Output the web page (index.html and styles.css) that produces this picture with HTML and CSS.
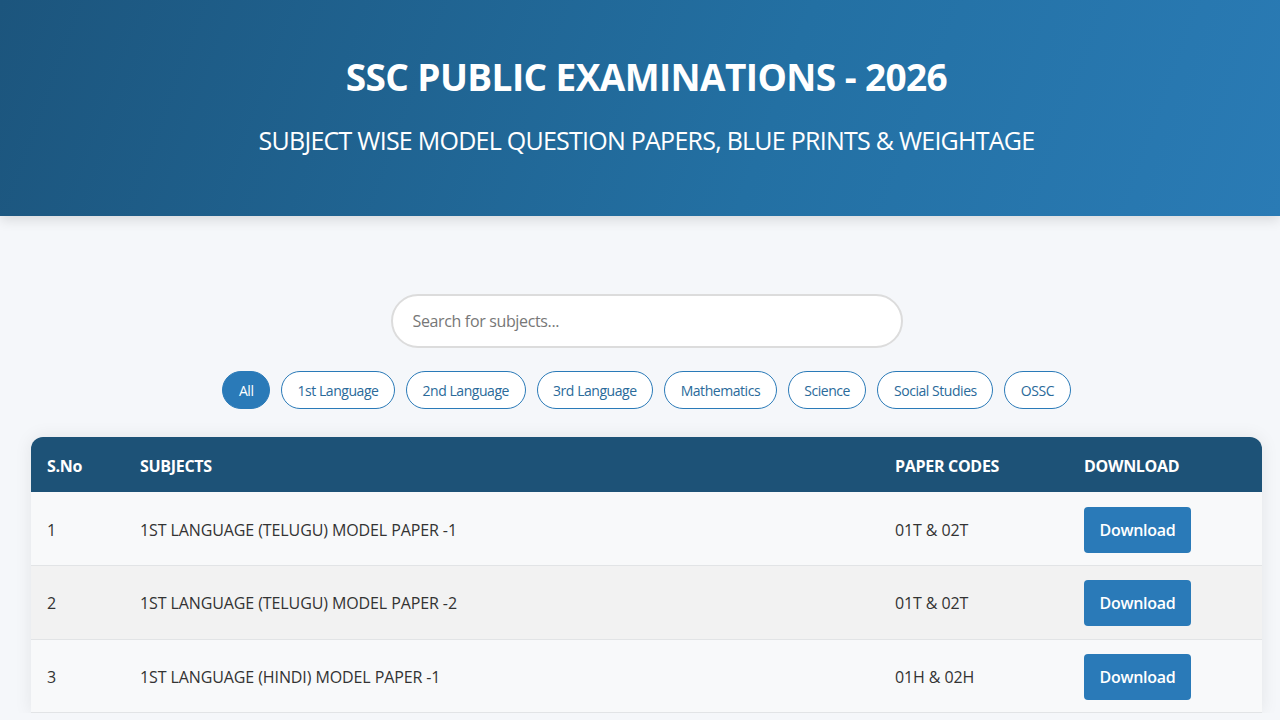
FILE: index.html
```html
<!DOCTYPE html>
<html lang="en">
<head>
<meta charset="utf-8">
<title>SSC Public Examinations 2026</title>
<link rel="stylesheet" href="styles.css">
</head>
<body>
<header class="hero">
  <h1 class="hero-title">SSC PUBLIC EXAMINATIONS - 2026</h1>
  <p class="hero-sub">SUBJECT WISE MODEL QUESTION PAPERS, BLUE PRINTS &amp; WEIGHTAGE</p>
</header>
<main class="content">
  <div class="search-wrap">
    <input class="search" type="text" placeholder="Search for subjects...">
  </div>
  <div class="filters">
    <button class="chip active">All</button>
    <button class="chip">1st Language</button>
    <button class="chip">2nd Language</button>
    <button class="chip">3rd Language</button>
    <button class="chip">Mathematics</button>
    <button class="chip">Science</button>
    <button class="chip">Social Studies</button>
    <button class="chip">OSSC</button>
  </div>
  <div class="table-card">
    <table class="papers">
      <colgroup>
        <col class="c-sno"><col class="c-subj"><col class="c-code"><col class="c-dl">
      </colgroup>
      <thead>
        <tr><th>S.No</th><th>SUBJECTS</th><th>PAPER CODES</th><th>DOWNLOAD</th></tr>
      </thead>
      <tbody>
        <tr><td>1</td><td>1ST LANGUAGE (TELUGU) MODEL PAPER -1</td><td>01T &amp; 02T</td><td><a class="dl" href="#">Download</a></td></tr>
        <tr><td>2</td><td>1ST LANGUAGE (TELUGU) MODEL PAPER -2</td><td>01T &amp; 02T</td><td><a class="dl" href="#">Download</a></td></tr>
        <tr><td>3</td><td>1ST LANGUAGE (HINDI) MODEL PAPER -1</td><td>01H &amp; 02H</td><td><a class="dl" href="#">Download</a></td></tr>
      </tbody>
    </table>
  </div>
</main>
</body>
</html>
```
FILE: styles.css
```css
* { box-sizing: border-box; }
html, body { margin: 0; padding: 0; }
body {
  background: #f5f7fa;
  font-family: "Open Sans", "Noto Sans", sans-serif;
  color: #333;
  overflow: hidden;
}
.hero {
  height: 216px;
  background: linear-gradient(110deg, #1c557d 0%, #2370a3 60%, #2a7bb5 100%);
  box-shadow: 0 4px 12px rgba(0,0,0,0.12);
  color: #fff;
  text-align: center;
  padding: 52px 0 0 13px;
}
.hero-title {
  margin: 0;
  font-size: 37px;
  font-weight: 700;
  letter-spacing: -0.6px;
  line-height: 50px;
}
.hero-sub {
  margin: 22px 0 0;
  font-size: 25px;
  font-weight: 400;
  letter-spacing: -0.75px;
  line-height: 32px;
}
.content {
  padding: 78px 18px 0 31px;
}
.search-wrap {
  display: flex;
  justify-content: center;
}
.search {
  width: 512px;
  height: 54px;
  border: 2px solid #dcdcdc;
  border-radius: 27px;
  padding: 0 20px;
  font-family: inherit;
  font-size: 16px;
  letter-spacing: -0.35px;
  color: #333;
  background: #fff;
  outline: none;
}
.search::placeholder { color: #777; }
.filters {
  display: flex;
  justify-content: center;
  gap: 11px;
  margin-top: 23px;
}
.chip {
  height: 38px;
  padding: 0 15.5px;
  border: 1.5px solid #2a7ab8;
  border-radius: 19px;
  background: #fff;
  color: #2a6a9a;
  font-family: inherit;
  font-size: 14px;
  letter-spacing: -0.45px;
}
.chip.active {
  background: #2a7ab8;
  color: #fff;
}
.table-card {
  margin-top: 28px;
  border-radius: 12px 12px 0 0;
  overflow: hidden;
  box-shadow: 0 0 18px rgba(0,0,0,0.08);
}
.papers {
  width: 100%;
  border-collapse: collapse;
  table-layout: fixed;
}
.c-sno { width: 93px; }
.c-code { width: 189px; }
.c-dl { width: 194px; }
.papers th {
  background: #1d5277;
  color: #fff;
  text-align: left;
  font-size: 16px;
  font-weight: 700;
  letter-spacing: -0.3px;
  height: 55px;
  padding: 2px 15px 0 16px;
}
.papers td {
  height: 73.6px;
  padding: 2px 15px 0 16px;
  font-size: 16px;
  letter-spacing: -0.1px;
  color: #333;
  border-bottom: 1px solid #e2e4e6;
  background: #f8f9fa;
}
.papers tbody tr:nth-child(even) td { background: #f2f2f2; }
.dl {
  display: inline-flex;
  align-items: center;
  justify-content: center;
  width: 107px;
  height: 46px;
  background: #2a7ab8;
  color: #fff;
  border-radius: 4px;
  text-decoration: none;
  font-size: 16px;
  font-weight: 600;
  letter-spacing: -0.3px;
}
```
